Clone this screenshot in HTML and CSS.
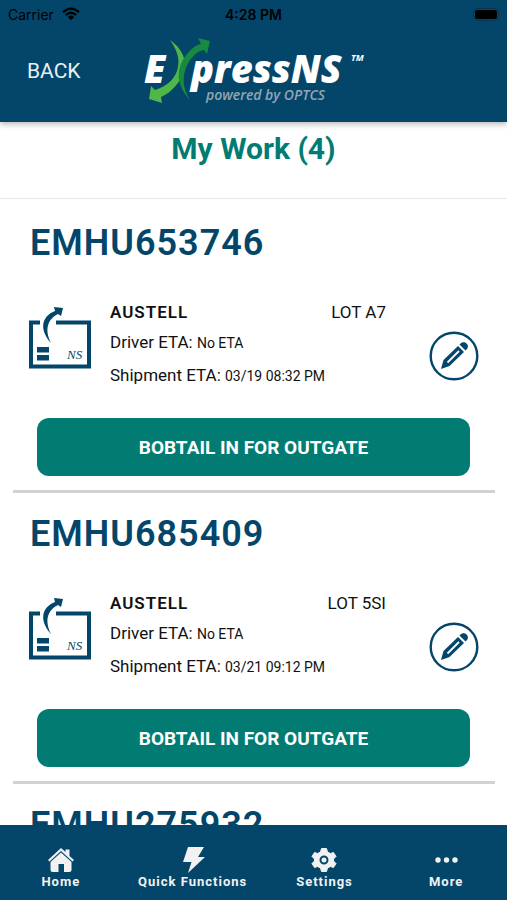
FILE: index.html
```html
<!DOCTYPE html>
<html lang="en">
<head>
    <meta charset="UTF-8">
    <meta name="viewport" content="width=device-width, initial-scale=1.0">
    <title>ExpressNS - My Work</title>
    <link rel="stylesheet" href="styles.css">
</head>
<body>
    <!-- shared icons -->
    <svg class="sprite" aria-hidden="true">
        <symbol id="icon-load" viewBox="0 0 62 62">
            <path d="M11 15.500H2V59.500H60V15.500H27" fill="none" stroke="#03466a" stroke-width="4"/>
            <path d="M22 36C11 24 11 10 26 4L25 0L34 1L32 9L29 7C19 12 15 22 22 36Z" fill="#03466a"/>
            <path d="M8 40H20V45.500H8zM8 48H20V53.500H8z" fill="#03466a"/>
            <text x="38" y="52" class="load-ns">NS</text>
        </symbol>
        <symbol id="icon-pencil" viewBox="0 0 50 50">
            <circle cx="25" cy="25" r="23.300" fill="none" stroke="#03466a" stroke-width="2.400"/>
            <path d="M12 38L14.500 29L29 15L35 21L20.500 35Z" fill="#03466a"/>
            <path d="M18.500 31.500L30 20" stroke="#fff" stroke-width="1.800"/>
            <path d="M30.500 13.500C33 10.500 36 11 37.500 12.500C39.500 14.500 39.500 17 36.500 19.500Z" fill="#03466a"/>
        </symbol>
    </svg>

    <header class="header">
        <div class="status-bar">
            <span class="carrier">Carrier
                <svg width="18" height="14" viewBox="0 0 18 14" aria-hidden="true">
                    <path d="M1 5.200Q9-1.800 17 5.200M3.800 8Q9 3.500 14.200 8" fill="none" stroke="#000" stroke-width="2.200"/>
                    <path d="M5.800 10Q9 7.200 12.200 10L9 13.200Z"/>
                </svg>
            </span>
            <span class="time">4:28 PM</span>
            <span class="battery"><span class="battery-level"></span></span>
        </div>
        <div class="top-bar">
            <button type="button" class="back">BACK</button>
            <svg class="logo" width="224" height="70" viewBox="0 0 224 70" role="img" aria-label="ExpressNS powered by OPTCS">
                <text x="2" y="47" class="logo-name">E</text>
                <text x="49" y="47" class="logo-name">pressNS</text>
                <text x="209" y="25" class="logo-tm">TM</text>
                <text x="64" y="64" class="logo-sub">powered by OPTCS</text>
                <path d="M28 4C42 14 48 29 38 44C32 53 26 58 19 61L20 67L7 63L9 50L13 54C26 50 34 42 36 31C38 21 34 13 28 4Z" fill="#4fb748"/>
                <path d="M48 64C33 48 34 31 45 18C50 12 54 9 59 8L56 2L68 5L65 18L62 14C54 15 47 24 44 32C40 43 41 52 48 64Z" fill="#178943"/>
            </svg>
        </div>
    </header>

    <main class="content">
        <h1 class="page-title">My Work (4)</h1>

        <section class="load">
            <h2 class="load-id">EMHU653746</h2>
            <div class="load-body">
                <svg class="load-icon" aria-hidden="true"><use href="#icon-load"/></svg>
                <div class="load-info">
                    <div class="load-place"><strong>AUSTELL</strong><span>LOT A7</span></div>
                    <p>Driver ETA: <span class="value">No ETA</span></p>
                    <p>Shipment ETA: <span class="value">03/19 08:32 PM</span></p>
                </div>
                <button type="button" class="edit" aria-label="Edit"><svg><use href="#icon-pencil"/></svg></button>
            </div>
            <button type="button" class="action">BOBTAIL IN FOR OUTGATE</button>
        </section>

        <section class="load">
            <h2 class="load-id">EMHU685409</h2>
            <div class="load-body">
                <svg class="load-icon" aria-hidden="true"><use href="#icon-load"/></svg>
                <div class="load-info">
                    <div class="load-place"><strong>AUSTELL</strong><span>LOT 5SI</span></div>
                    <p>Driver ETA: <span class="value">No ETA</span></p>
                    <p>Shipment ETA: <span class="value">03/21 09:12 PM</span></p>
                </div>
                <button type="button" class="edit" aria-label="Edit"><svg><use href="#icon-pencil"/></svg></button>
            </div>
            <button type="button" class="action">BOBTAIL IN FOR OUTGATE</button>
        </section>

        <section class="load">
            <h2 class="load-id">EMHU275932</h2>
        </section>
    </main>

    <nav class="tabs">
        <a href="#home">
            <svg width="26" height="26" viewBox="0 0 26 26" aria-hidden="true">
                <path d="M0 13L13 1L17.500 5V2.500H21.500V9L26 13L24.500 14.500L13 4L1.500 14.500Z"/>
                <path d="M13 5.500L23.500 15V23Q23.500 25 21.500 25H16V17H10.500V25H4.500Q2.500 25 2.500 23V15Z"/>
            </svg>
            Home
        </a>
        <a href="#quick">
            <svg width="26" height="26" viewBox="0 0 26 26" aria-hidden="true">
                <path d="M8 0H24L18 10H25L8 26L11.500 15H3Z"/>
            </svg>
            Quick Functions
        </a>
        <a href="#settings">
            <svg width="26" height="26" viewBox="0 0 26 26" aria-hidden="true">
                <path d="M10.500 1.500H15.500L16.500 5L19.500 6.500L22.500 5.500L25 9.500L22.500 12V14L25 16.500L22.500 20.500L19.500 19.500L16.500 21L15.500 24.500H10.500L9.500 21L6.500 19.500L3.500 20.500L1 16.500L3.500 14V12L1 9.500L3.500 5.500L6.500 6.500L9.500 5Z" stroke="#f2f2f2" stroke-linejoin="round"/>
                <circle cx="13" cy="13" r="3.500" fill="#f2f2f2" stroke="#03466a" stroke-width="2"/>
            </svg>
            Settings
        </a>
        <a href="#more">
            <svg width="26" height="26" viewBox="0 0 26 26" aria-hidden="true">
                <circle cx="5" cy="13" r="2.700"/>
                <circle cx="13.500" cy="13" r="2.700"/>
                <circle cx="22" cy="13" r="2.700"/>
            </svg>
            More
        </a>
    </nav>
</body>
</html>
```
FILE: styles.css
```css
* {
    box-sizing: border-box;
}
body {
    margin: 0;
    height: 100vh;
    display: flex;
    flex-direction: column;
    background: #fff;
    color: #111;
    font-family: Roboto, sans-serif;
}
h1, h2, p { margin: 0; }
button {
    font-family: inherit;
    border: none;
    background: none;
    padding: 0;
    cursor: pointer;
}
.sprite {
    position: absolute;
    width: 0;
    height: 0;
}

/* header */
.header {
    flex: none;
    background: #03466a;
    box-shadow: 0 2px 6px rgba(0,0,0,0.3);
    z-index: 1;
}
.status-bar {
    display: grid;
    grid-template-columns: 1fr auto 1fr;
    align-items: center;
    height: 28px;
    padding: 0 8px;
    color: #000;
    font-family: Inter, sans-serif;
    font-size: 14px;
}
.carrier {
    display: flex;
    align-items: center;
    gap: 8px;
}
.time { font-weight: 600; }
.battery {
    justify-self: end;
    width: 26px;
    padding: 1px;
    border: 1px solid #073651;
    border-radius: 4px;
}
.battery-level {
    display: block;
    height: 9px;
    border-radius: 2px;
    background: #000;
}
.top-bar {
    display: grid;
    grid-template-columns: 1fr auto 1fr;
    align-items: center;
    height: 94px;
    padding: 0 27px 8px;
}
.back {
    justify-self: start;
    color: #e9f1f5;
    font-size: 21px;
    line-height: 30px;
}
.logo-name {
    font: italic 800 38px "Open Sans", sans-serif;
    fill: #fff;
}
.logo-tm {
    font: italic 700 9px "Open Sans", sans-serif;
    fill: #fff;
}
.logo-sub {
    font: italic 600 14px "Open Sans", sans-serif;
    fill: #93a5b5;
}

/* work list */
.content {
    flex: 1;
    min-height: 0;
    overflow-y: auto;
    scrollbar-width: none;
}
.page-title {
    height: 77px;
    margin-bottom: 3px;
    padding-top: 9px;
    border-bottom: 1px solid #e8e8e8;
    color: #027b72;
    font-size: 30px;
    line-height: 36px;
    text-align: center;
}
.load {
    margin: 0 12px 0 13px;
    padding: 21px 16px 14px;
    border-bottom: 3px solid #d2d2d2;
}
.load-id {
    padding-left: 1px;
    color: #03466a;
    font-size: 36px;
    font-weight: 600;
    line-height: 40px;
    letter-spacing: 1px;
}
.load-body {
    display: flex;
    align-items: flex-start;
    margin-top: 35px;
}
.load-icon {
    flex: none;
    width: 62px;
    height: 62px;
    margin-top: 9px;
}
.load-ns {
    font: italic 13px "Liberation Serif", serif;
    fill: #03466a;
}
.load-info {
    flex: 1;
    margin-left: 19px;
    font-size: 17px;
    line-height: 33px;
}
.load-place {
    display: flex;
    justify-content: space-between;
    line-height: 28px;
}
.load-place strong {
    font-weight: 600;
    letter-spacing: 1px;
}
.value {
    font-size: 14px;
    line-height: 1;
}
.edit {
    margin: 33px 0 0 43px;
    width: 50px;
    height: 50px;
}
.edit svg {
    display: block;
    width: 50px;
    height: 50px;
}
.action {
    display: block;
    width: calc(100% - 17px);
    height: 58px;
    margin: 26px 0 0 8px;
    border-radius: 12px;
    background: #027b72;
    color: #fff;
    font-size: 19px;
    font-weight: bold;
}

/* bottom tabs */
.tabs {
    flex: none;
    display: grid;
    grid-template-columns: 12fr 14fr 12fr 12fr;
    height: 75px;
    padding-top: 22px;
    background: #03466a;
}
.tabs a {
    display: flex;
    flex-direction: column;
    align-items: center;
    gap: 1px;
    color: #f2f2f2;
    font-size: 13px;
    font-weight: 700;
    line-height: 16px;
    letter-spacing: 1px;
    text-decoration: none;
    white-space: nowrap;
}
.tabs svg { fill: #f2f2f2; }
```
